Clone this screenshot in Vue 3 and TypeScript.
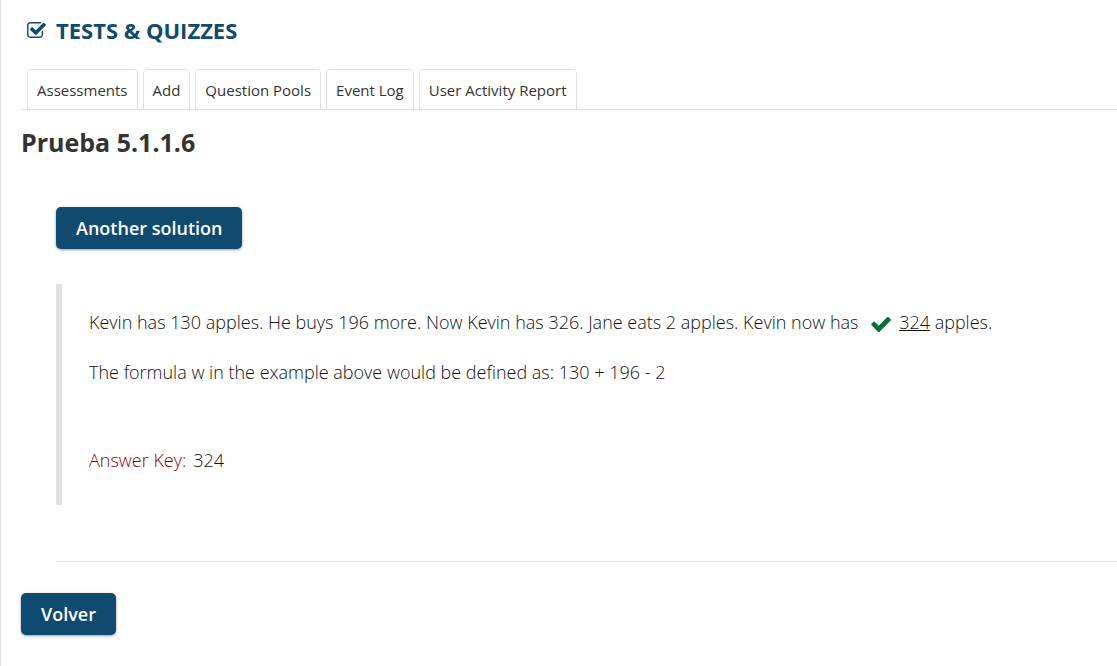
<script setup lang="ts">
interface Tab {
  label: string
  href: string
}

const tabs: Tab[] = [
  { label: 'Assessments', href: '#assessments' },
  { label: 'Add', href: '#add' },
  { label: 'Question Pools', href: '#pools' },
  { label: 'Event Log', href: '#events' },
  { label: 'User Activity Report', href: '#activity' },
]
const answer = 324
</script>

<template>
  <div class="tool">
    <header class="tool-header">
      <a class="tool-title" href="#tests">
        <svg class="tool-icon" viewBox="0 128 1664 1408" aria-hidden="true">
          <path d="M1408 930v318q0 119-84.5 203.5t-203.5 84.5h-832q-119 0-203.5-84.5t-84.5-203.5v-832q0-119 84.5-203.5t203.5-84.5h832q63 0 117 25 15 7 18 23 3 17-9 29l-49 49q-10 10-23 10-3 0-9-2-23-6-45-6h-832q-66 0-113 47t-47 113v832q0 66 47 113t113 47h832q66 0 113-47t47-113v-254q0-13 9-22l64-64q10-10 23-10 6 0 12 3 20 8 20 29zm231-489l-814 814q-24 24-57 24t-57-24l-430-430q-24-24-24-57t24-57l110-110q24-24 57-24t57 24l263 263 647-647q24-24 57-24t57 24l110 110q24 24 24 57t-24 57z" />
        </svg>
        <span>TESTS &amp; QUIZZES</span>
      </a>
    </header>

    <nav class="tabs">
      <a v-for="tab in tabs" :key="tab.label" class="tab" :href="tab.href">{{ tab.label }}</a>
    </nav>

    <main>
      <h1 class="page-title">Prueba 5.1.1.6</h1>

      <section class="preview">
        <button class="button" type="button">Another solution</button>

        <blockquote class="question">
          <p>
            Kevin has 130 apples. He buys 196 more. Now Kevin has 326. Jane eats 2 apples. Kevin now has
            <svg class="correct" viewBox="121 334 1550 1188" role="img" aria-label="Correct">
              <path d="M1671 566q0 40-28 68l-724 724-136 136q-28 28-68 28t-68-28l-136-136-362-362q-28-28-28-68t28-68l136-136q28-28 68-28t68 28l294 295 656-657q28-28 68-28t68 28l136 136q28 28 28 68z" />
            </svg>
            <u>{{ answer }}</u> apples.
          </p>
          <p>The formula w in the example above would be defined as: 130 + 196 - 2</p>
          <p class="answer"><span class="answer-label">Answer Key:</span>{{ answer }}</p>
        </blockquote>
      </section>

      <button class="button" type="button">Volver</button>
    </main>
  </div>
</template>

<style>
body {
  margin: 0;
  background: #fff;
}
</style>

<style scoped>
.tool {
  box-sizing: border-box;
  min-height: 100vh;
  padding: 13px 0 31px 20px;
  border-left: 1px solid #e0e1e3;
  color: #333;
  font-family: "Open Sans", "Noto Sans", sans-serif;
  font-size: 18px;
  line-height: 26px;
}

.tool-header {
  padding-left: 6px;
}

.tool-title {
  display: inline-flex;
  align-items: center;
  gap: 10px;
  color: #0f4b70;
  font-size: 22px;
  font-weight: 700;
  line-height: 34px;
  text-decoration: none;
}

.tool-icon {
  width: 19px;
  height: 16px;
  fill: currentColor;
}

.tabs {
  display: flex;
  gap: 5px;
  margin-top: 22px;
  padding-left: 6px;
  border-bottom: 1px solid #e0e1e3;
}

.tab {
  padding: 8px 9px 7px;
  border: 1px solid #e0e1e3;
  border-bottom: 0;
  border-radius: 5px 5px 0 0;
  color: #333;
  font-size: 15px;
  line-height: 24px;
  text-decoration: none;
}

.page-title {
  margin: 15px 0 48px;
  font-size: 25px;
  font-weight: 700;
  line-height: 34px;
}

.preview {
  margin: 0 0 31px 35px;
  padding-bottom: 56px;
  border-bottom: 1px solid #e0e1e3;
}

.button {
  display: block;
  padding: 8px 20px;
  border: 0;
  border-radius: 5px;
  background: #0f4b70;
  box-shadow: 0 1px 3px rgba(0, 0, 0, 0.4);
  color: #fff;
  font: 600 18px/26px "Open Sans", "Noto Sans", sans-serif;
  cursor: pointer;
}

.question {
  margin: 35px 0 0;
  padding: 25px 27px 32px;
  border-left: 6px solid #e0e1e3;
  color: #111;
  font-weight: 300;
}

.question p {
  margin: 0 0 24px;
}

.correct {
  width: 20px;
  height: 15px;
  margin: 0 8px;
  fill: #026f38;
  vertical-align: -3px;
}

.question .answer {
  margin: 62px 0 0;
}

.answer-label {
  margin-right: 7px;
  color: #8a0010;
}
</style>
